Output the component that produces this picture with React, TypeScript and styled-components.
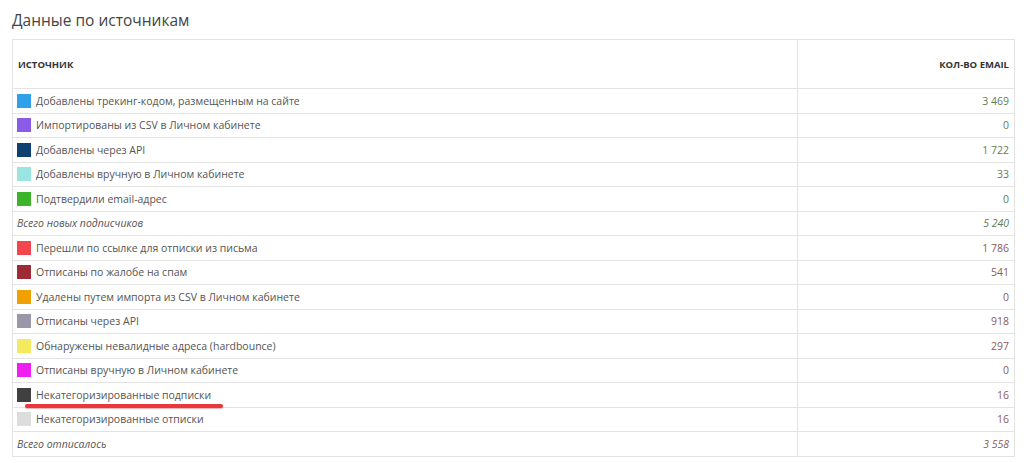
import React from 'react';
import styled, { createGlobalStyle } from 'styled-components';

const GlobalStyle = createGlobalStyle`
  body {
    margin: 0;
    background: #fff;
    font-family: "Open Sans", "Liberation Sans", sans-serif;
  }
`;

const Page = styled.div`
  padding: 9px 9px 0 12px;
`;

const Title = styled.h2`
  margin: 0 0 8px;
  font-size: 15.5px;
  font-weight: 400;
  color: #444;
  line-height: 22px;
`;

const Table = styled.table`
  width: 1003px;
  border-collapse: collapse;
  border: 1px solid #e3e3e3;
  font-size: 10.5px;
  color: #555;
`;

const HeadCell = styled.th<{ $right?: boolean }>`
  height: 48px;
  padding: 0 5px;
  font-size: 9.5px;
  font-weight: 700;
  color: #333;
  text-transform: uppercase;
  text-align: ${(p) => (p.$right ? 'right' : 'left')};
  border: 1px solid #e3e3e3;
  width: ${(p) => (p.$right ? '206px' : 'auto')};
`;

const Cell = styled.td<{ $total?: boolean }>`
  height: 23.5px;
  padding: 0 5px 0 4px;
  border: 1px solid #e3e3e3;
  font-style: ${(p) => (p.$total ? 'italic' : 'normal')};
  position: relative;
`;

const NumCell = styled(Cell)<{ $tone: 'in' | 'out' }>`
  text-align: right;
  color: ${(p) => (p.$tone === 'in' ? '#5f7d58' : '#8c5c5c')};
`;

const Label = styled.span`
  display: flex;
  align-items: center;
  gap: 5px;
`;

const Swatch = styled.span<{ $color: string }>`
  width: 14px;
  height: 14px;
  background: ${(p) => p.$color};
  flex-shrink: 0;
`;

const Underline = styled.span`
  position: absolute;
  left: 12px;
  top: 21px;
  width: 198px;
  height: 4px;
  border-radius: 2px;
  background: #e9383c;
  box-shadow: 0 1px 1px rgba(160, 40, 40, 0.35);
`;

type Row = {
  label: string;
  value: string;
  color?: string;
  total?: boolean;
  tone: 'in' | 'out';
  marked?: boolean;
};

const rows: Row[] = [
  { label: 'Добавлены трекинг-кодом, размещенным на сайте', value: '3 469', color: '#2ea1e8', tone: 'in' },
  { label: 'Импортированы из CSV в Личном кабинете', value: '0', color: '#8c5be6', tone: 'in' },
  { label: 'Добавлены через API', value: '1 722', color: '#10406f', tone: 'in' },
  { label: 'Добавлены вручную в Личном кабинете', value: '33', color: '#9ae5e0', tone: 'in' },
  { label: 'Подтвердили email-адрес', value: '0', color: '#3cb52a', tone: 'in' },
  { label: 'Всего новых подписчиков', value: '5 240', total: true, tone: 'in' },
  { label: 'Перешли по ссылке для отписки из письма', value: '1 786', color: '#f3454e', tone: 'out' },
  { label: 'Отписаны по жалобе на спам', value: '541', color: '#9e2a36', tone: 'out' },
  { label: 'Удалены путем импорта из CSV в Личном кабинете', value: '0', color: '#f0a000', tone: 'out' },
  { label: 'Отписаны через API', value: '918', color: '#9a98a8', tone: 'out' },
  { label: 'Обнаружены невалидные адреса (hardbounce)', value: '297', color: '#f3ea60', tone: 'out' },
  { label: 'Отписаны вручную в Личном кабинете', value: '0', color: '#f01ef0', tone: 'out' },
  { label: 'Некатегоризированные подписки', value: '16', color: '#404040', tone: 'out', marked: true },
  { label: 'Некатегоризированные отписки', value: '16', color: '#dcdcdc', tone: 'out' },
  { label: 'Всего отписалось', value: '3 558', total: true, tone: 'out' },
];

const App: React.FC = () => {
  return (
    <>
      <GlobalStyle />
      <Page>
        <Title>Данные по источникам</Title>
        <Table>
          <thead>
            <tr>
              <HeadCell>Источник</HeadCell>
              <HeadCell $right>Кол-во email</HeadCell>
            </tr>
          </thead>
          <tbody>
            {rows.map((r) => (
              <tr key={r.label}>
                <Cell $total={r.total}>
                  {r.total ? (
                    r.label
                  ) : (
                    <Label>
                      <Swatch $color={r.color!} />
                      {r.label}
                    </Label>
                  )}
                  {r.marked && <Underline />}
                </Cell>
                <NumCell $tone={r.tone} $total={r.total}>
                  {r.value}
                </NumCell>
              </tr>
            ))}
          </tbody>
        </Table>
      </Page>
    </>
  );
};

export default App;
